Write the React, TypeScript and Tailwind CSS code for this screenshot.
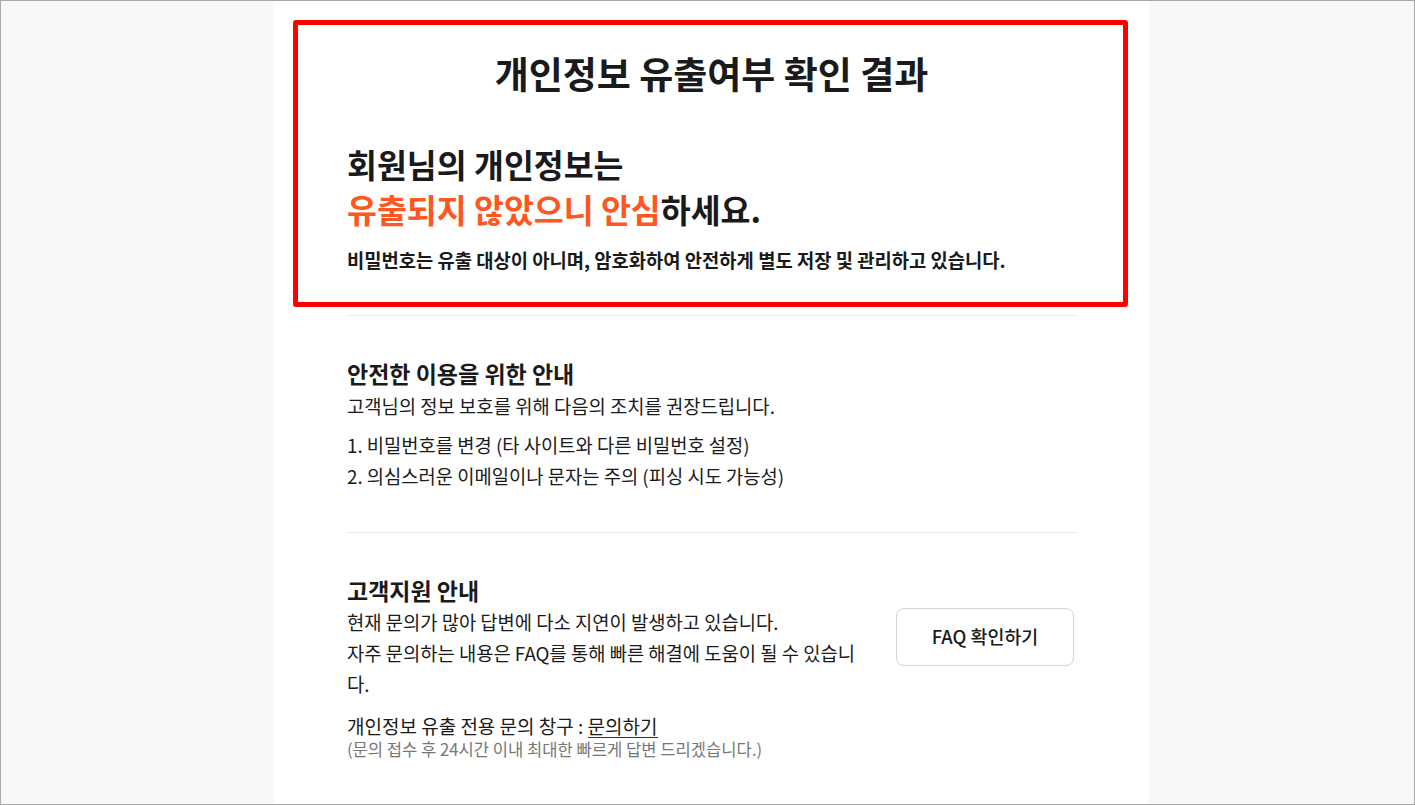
import React from "react";

const font = {
  fontFamily: '"Noto Sans CJK KR", "Noto Sans", sans-serif',
};

export default function App() {
  return (
    <div
      className="h-[805px] w-full overflow-hidden border border-[#a9a9a9] bg-[#f8f8f8] text-[#1a1a1a]"
      style={font}
    >
      <div className="ml-[273px] min-h-full w-[875px] bg-white px-[73px] pt-[19px]">
        {/* 결과 영역 */}
        <section className="-ml-[54px] -mr-[52px] rounded-[3px] border-[5px] border-[#ff0000] pb-[29px] pl-[49px] pr-[47px] pt-[24px]">
          <h1 className="text-center text-[37px] font-bold leading-[48px]">
            개인정보 유출여부 확인 결과
          </h1>
          <p className="mt-[44px] text-[32.5px] font-semibold leading-[45px]">
            회원님의 개인정보는
            <br />
            <span className="text-[#ff5722]">유출되지 않았으니 안심</span>하세요.
          </p>
          <p className="mt-[16px] text-[18.75px] font-semibold leading-[26px]">
            비밀번호는 유출 대상이 아니며, 암호화하여 안전하게 별도 저장 및 관리하고 있습니다.
          </p>
        </section>

        <hr className="mt-[8px] border-t border-[#e8e8e8]" />

        {/* 안전한 이용 */}
        <section className="pb-[41px] pt-[41px]">
          <h2 className="text-[23px] font-bold leading-[32px]">
            안전한 이용을 위한 안내
          </h2>
          <p className="mt-[2px] text-[18.8px] leading-[30px]">
            고객님의 정보 보호를 위해 다음의 조치를 권장드립니다.
          </p>
          <ol className="mt-[8px] text-[18.75px] leading-[31px]">
            <li>1. 비밀번호를 변경 (타 사이트와 다른 비밀번호 설정)</li>
            <li>2. 의심스러운 이메일이나 문자는 주의 (피싱 시도 가능성)</li>
          </ol>
        </section>

        <hr className="border-t border-[#e8e8e8]" />

        {/* 고객지원 */}
        <section className="flex items-start justify-between pt-[41px]">
          <div className="w-[520px]">
            <h2 className="text-[23px] font-bold leading-[32px]">고객지원 안내</h2>
            <p className="text-[18.75px] leading-[31px]">
              현재 문의가 많아 답변에 다소 지연이 발생하고 있습니다.
              <br />
              자주 문의하는 내용은 FAQ를 통해 빠른 해결에 도움이 될 수 있습니다.
            </p>
            <p className="mt-[15px] text-[19px] leading-[24px]">
              개인정보 유출 전용 문의 창구 :{" "}
              <a className="inline-block border-b border-[#333] leading-[23px]">
                문의하기
              </a>
            </p>
            <p className="text-[16.6px] leading-[22px] text-[#777]">
              (문의 접수 후 24시간 이내 최대한 빠르게 답변 드리겠습니다.)
            </p>
          </div>
          <button className="mr-[2px] mt-[34px] h-[58px] w-[178px] rounded-[8px] border border-[#d4d4d4] bg-white text-[18.4px] font-medium">
            FAQ 확인하기
          </button>
        </section>
      </div>
    </div>
  );
}
